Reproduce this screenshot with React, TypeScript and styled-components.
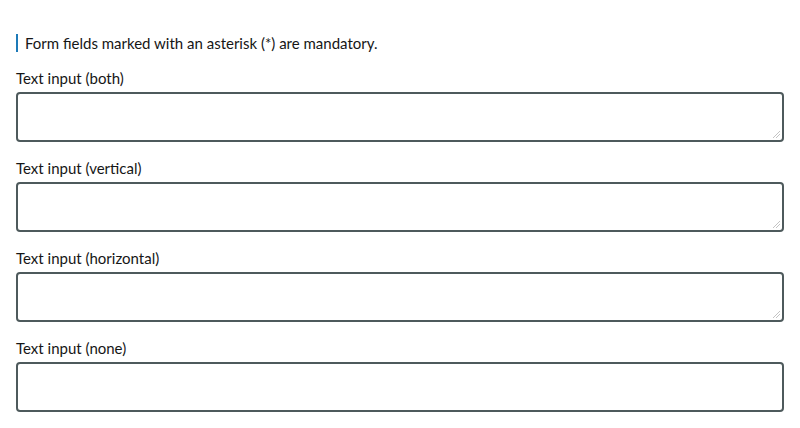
import React from "react";
import styled, { createGlobalStyle } from "styled-components";

const Global = createGlobalStyle`
  html, body { margin: 0; padding: 0; background: #fff; }
  body { font-family: Lato, "Open Sans", sans-serif; color: #161616; }
  * { box-sizing: border-box; }
`;

const Page = styled.div`
  padding: 34px 16px 0 16px;
  display: flex;
  flex-direction: column;
`;

const Notice = styled.p`
  margin: 0 0 17px 0;
  padding-left: 7px;
  border-left: 2px solid #1d7ab8;
  font-size: 15px;
  line-height: 18px;
`;

const Field = styled.div`
  display: flex;
  flex-direction: column;
  gap: 5px;
  margin-bottom: 17px;
`;

const Label = styled.label`
  font-size: 15px;
  line-height: 18px;
`;

const Area = styled.textarea<{ $resize: string }>`
  display: block;
  width: 768px;
  height: 50px;
  border: 2px solid #4e5a5c;
  border-radius: 4px;
  resize: ${(p) => p.$resize};
  font-family: inherit;
  font-size: 15px;
  padding: 6px 8px;
  margin: 0;
  background: #fff;

  &::-webkit-resizer {
    background-color: transparent;
    background-image: linear-gradient(
      to bottom right,
      transparent 0 55%,
      #c4c4c4 55% 62%,
      transparent 62% 72%,
      #c4c4c4 72% 80%,
      transparent 80%
    );
    background-repeat: no-repeat;
    background-position: right 2px bottom 2px;
    background-size: 8px 8px;
  }
`;

const fields = [
  { label: "Text input (both)", resize: "both" },
  { label: "Text input (vertical)", resize: "vertical" },
  { label: "Text input (horizontal)", resize: "horizontal" },
  { label: "Text input (none)", resize: "none" },
];

export default function App() {
  return (
    <>
      <Global />
      <Page>
        <Notice>Form fields marked with an asterisk (*) are mandatory.</Notice>
        {fields.map((f, i) => (
          <Field key={i}>
            <Label htmlFor={`ta${i}`}>{f.label}</Label>
            <Area id={`ta${i}`} $resize={f.resize} />
          </Field>
        ))}
      </Page>
    </>
  );
}
